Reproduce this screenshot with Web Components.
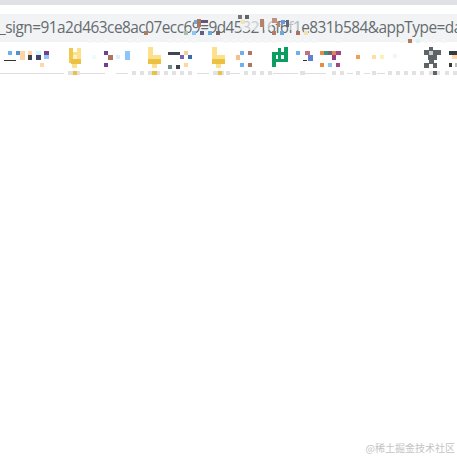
<!DOCTYPE html>
<html><head><meta charset="utf-8"><style>html,body{margin:0;padding:0;background:#fff}</style></head>
<body><browser-page></browser-page>
<script>
const C={blue:'#6cb0f0',lb:'#8cc6f6',brown:'#b0765c',peach:'#fdd6a4',purple:'#74408e',cyan:'#d4f6fb',ink:'#3f4650',gold:'#ecc040',pale:'#fde08c',green:'#0a9f60',grey:'#e2e2e2',faint:'#f6f6f6',line:'#dedede',dk:'#5f6468'};
const S=(x,y,c,w=4,h=4)=>[x-2,y-2,w,h,c];
const dots=(xs,y,c,w=4,h=4)=>xs.map(x=>S(x,y,c,w,h));
const yellow=x=>[[x,47,5,17,C.pale],[x+5,55,8,5,C.pale],[x,59,13,5,C.gold],[x+4,64,5,4,C.pale]];
const cells=[
 [194,20,4,4,'#6aa8e0'],[197,19,4,8,C.brown],[201,20,7,3,'#5f5878'],[238,15,4,4,'#777'],[245,15,4,4,'#62626a'],[241,20,4,4,'#f5e2b4'],[260,19,4,8,'#b88068'],[272,18,5,5,'#c09080'],[277,22,3,5,'#b08878'],[281,20,4,4,'#6a98e0'],[286,20,3,7,'#60687a'],
 ...dots([146],33,'#ab7c66'),...dots([186],33,'#a8c0a8'),...dots([194],33,C.lb),...dots([202],33,'#5f5f80'),...dots([210],33,'#6aa8e0'),...dots([218],33,'#806464'),...dots([274],33,'#b07c68'),...dots([282],33,'#6aa8e0'),...dots([298],33,'#ab7060'),...dots([306],33,'#f5e0b0'),
 ...dots([90,98,106,130,138,170,178,186,194,226,234,242,250,258,266,274,290,298,306,314,338,402,426,434,444],41,C.faint),
 ...dots([410],41,'#b87860'),...dots([418],41,C.cyan),
 [8,51,4,4,C.blue],[16,51,4,4,'#4f94d0'],[20,51,5,9,C.peach],[28,51,4,4,C.peach],[28,55,4,5,C.ink],[36,51,5,4,C.cyan],[36,55,5,5,'#404468'],[44,51,5,4,C.purple],[44,55,5,4,C.lb],[4,60,12,1,'#333'],[40,63,4,4,'#fdd8a8'],
 [69,48,4,15,'#f0c84a'],[77,48,4,12,C.pale],[73,52,4,3,C.pale],[73,55,4,4,'#fff2c8'],[71,59,10,5,C.gold],[72,64,5,4,C.pale],
 [92,55,4,4,'#eafcff'],[104,51,4,4,C.purple],[108,55,5,5,C.brown],[104,63,4,4,C.purple],[116,55,4,4,'#d8f0ff'],[125,51,5,9,C.lb],
 ...yellow(148),
 [168,52,12,3,C.ink],[168,65,4,4,'#6f8a8c'],[176,65,4,4,'#404448'],[180,55,4,4,'#7860b8'],[184,51,4,4,'#f8cc98'],[188,55,4,4,'#3868b8'],[184,63,4,4,'#fdd6a4'],
 ...yellow(212),
 [240,51,4,4,C.blue],[248,51,4,4,C.brown],[236,55,4,5,'#f8c088'],[240,63,4,4,C.blue],[248,63,4,4,C.brown],
 [272,52,4,15,C.green],[278,48,3,12,C.green],[284,47,4,15,C.green],[272,52,16,3,C.green],[272,59,16,3,C.green],
 [296,51,4,4,C.blue],[305,51,5,4,'#c07078'],[308,55,5,6,'#6080d0'],[303,60,4,1,'#333'],
 [320,51,4,4,'#e09040'],[324,51,4,4,'#3f8f88'],[328,51,4,4,'#706868'],[332,51,4,4,'#d88860'],[336,51,5,4,'#a04880'],[332,55,4,5,'#9a3c88'],[320,63,4,4,'#e09040'],[328,63,4,4,C.lb],[336,63,4,4,'#a04880'],
 [356,55,4,4,'#f0a050'],[372,55,4,4,'#fde0a0'],[380,55,4,4,'#fdf0b8'],[393,54,4,4,'#f4f4f4'],
 [429,47,4,3,C.dk],[424,50,17,5,C.dk],[429,51,4,4,'#c8cdd0'],[428,55,9,5,C.dk],[429,60,5,4,C.dk],[424,63,5,5,C.dk],[433,63,4,5,C.dk],
 [449,51,8,4,'#333b40'],[452,55,5,4,'#fdd6a4'],[449,63,3,4,'#333b40'],[455,63,2,4,'#bbb'],
 [0,73,64,1,C.line],[80,73,25,1,C.line],[68,71,12,4,C.grey],[73,71,4,4,C.gold],
 [116,73,12,1,C.line],...dots([134,142,166,174,182,190,228,246,254,262,270,334,342,358,374,390,398,406,414,422,447,455],73,C.grey),
 [148,71,12,4,C.grey],[152,71,5,4,C.gold],[197,73,12,1,C.line],[213,71,11,4,C.grey],[218,71,4,4,C.gold],[230,73,10,1,C.line],[273,73,25,1,C.line],[300,71,5,4,C.grey],[305,73,21,1,C.line],[347,73,6,1,C.line],[364,73,6,1,C.line],[377,73,8,1,C.line],[429,71,11,4,C.grey],[433,71,4,4,C.dk]
];
class AddressBar extends HTMLElement{constructor(){super();this.attachShadow({mode:'open'}).innerHTML=`<style>
:host{display:block;height:28px;margin-top:9px;background:#f1f3f4;overflow:hidden}
div{font:15.4px/28px "Open Sans",sans-serif;letter-spacing:-.52px;color:#666b70;white-space:nowrap;margin-left:-1px}
</style><div><slot></slot></div>`}}
class MosaicLayer extends HTMLElement{constructor(){super();const r=cells.map(c=>`<rect x="${c[0]}" y="${c[1]}" width="${c[2]}" height="${c[3]}" fill="${c[4]}"/>`).join('');
this.attachShadow({mode:'open'}).innerHTML=`<style>:host{position:absolute;inset:0;display:block;pointer-events:none}svg{display:block;filter:blur(.6px)}</style>
<svg width="457" height="457" viewBox="0 0 457 457" aria-hidden="true"><rect x="240" y="14" width="18" height="16" fill="#f1f3f4" opacity=".72"/><rect x="264" y="14" width="8" height="16" fill="#f1f3f4" opacity=".6"/><rect x="289" y="14" width="9" height="16" fill="#f1f3f4" opacity=".6"/>${r}</svg>`}}
class WaterMark extends HTMLElement{constructor(){super();this.attachShadow({mode:'open'}).innerHTML=`<style>:host{display:block;margin-top:auto;padding:0 2px 2px 0;text-align:right;font:10px/14px "Noto Sans CJK SC","Liberation Sans",sans-serif;color:#c4c4c4}</style><slot></slot>`}}
class BrowserPage extends HTMLElement{constructor(){super();this.attachShadow({mode:'open'}).innerHTML=`<style>:host{display:flex;flex-direction:column;position:relative;width:457px;height:457px;overflow:hidden;background:#fff}
.top{height:5px;background:#dfe1e5;flex:none}</style><div class="top"></div><address-bar>_sign=91a2d463ce8ac07ecc69=9d453216f6f1e831b584&amp;appType=da</address-bar><water-mark>@稀土掘金技术社区</water-mark><mosaic-layer></mosaic-layer>`}}
customElements.define('address-bar',AddressBar);customElements.define('mosaic-layer',MosaicLayer);customElements.define('water-mark',WaterMark);customElements.define('browser-page',BrowserPage);
</script></body></html>
